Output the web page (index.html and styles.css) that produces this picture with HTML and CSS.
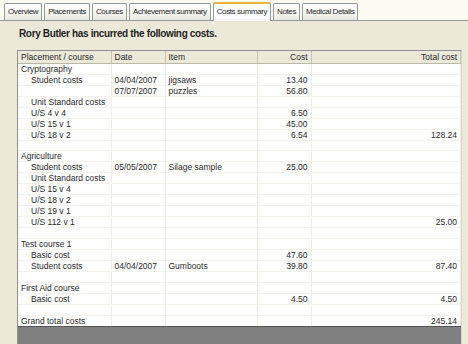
FILE: index.html
```html
<!DOCTYPE html>
<html lang="en">
<head>
  <meta charset="UTF-8" />
  <title>Costs summary</title>
  <link rel="stylesheet" href="styles.css">
</head>
<body>
  <div class="tabs">
    <div class="tab">Overview</div>
    <div class="tab">Placements</div>
    <div class="tab">Courses</div>
    <div class="tab">Achievement summary</div>
    <div class="tab active">Costs summary</div>
    <div class="tab">Notes</div>
    <div class="tab">Medical Details</div>
  </div>

  <div class="panel">
    <h1 class="title">Rory Butler has incurred the following costs.</h1>

    <div class="grid">
      <table class="costs">
        <colgroup>
          <col class="c-place"><col class="c-date"><col class="c-item"><col class="c-cost"><col class="c-total">
        </colgroup>
        <thead>
          <tr><th>Placement / course</th><th>Date</th><th>Item</th><th class="num">Cost</th><th class="num">Total cost</th></tr>
        </thead>
        <tbody>
          <tr><td>Cryptography</td><td></td><td></td><td></td><td></td></tr>
          <tr><td class="sub">Student costs</td><td>04/04/2007</td><td>jigsaws</td><td class="num">13.40</td><td></td></tr>
          <tr><td></td><td>07/07/2007</td><td>puzzles</td><td class="num">56.80</td><td></td></tr>
          <tr><td class="sub">Unit Standard costs</td><td></td><td></td><td></td><td></td></tr>
          <tr><td class="sub">U/S 4 v 4</td><td></td><td></td><td class="num">6.50</td><td></td></tr>
          <tr><td class="sub">U/S 15 v 1</td><td></td><td></td><td class="num">45.00</td><td></td></tr>
          <tr><td class="sub">U/S 18 v 2</td><td></td><td></td><td class="num">6.54</td><td class="num">128.24</td></tr>
          <tr><td></td><td></td><td></td><td></td><td></td></tr>
          <tr><td>Agriculture</td><td></td><td></td><td></td><td></td></tr>
          <tr><td class="sub">Student costs</td><td>05/05/2007</td><td>Silage sample</td><td class="num">25.00</td><td></td></tr>
          <tr><td class="sub">Unit Standard costs</td><td></td><td></td><td></td><td></td></tr>
          <tr><td class="sub">U/S 15 v 4</td><td></td><td></td><td></td><td></td></tr>
          <tr><td class="sub">U/S 18 v 2</td><td></td><td></td><td></td><td></td></tr>
          <tr><td class="sub">U/S 19 v 1</td><td></td><td></td><td></td><td></td></tr>
          <tr><td class="sub">U/S 112 v 1</td><td></td><td></td><td></td><td class="num">25.00</td></tr>
          <tr><td></td><td></td><td></td><td></td><td></td></tr>
          <tr><td>Test course 1</td><td></td><td></td><td></td><td></td></tr>
          <tr><td class="sub">Basic cost</td><td></td><td></td><td class="num">47.60</td><td></td></tr>
          <tr><td class="sub">Student costs</td><td>04/04/2007</td><td>Gumboots</td><td class="num">39.80</td><td class="num">87.40</td></tr>
          <tr><td></td><td></td><td></td><td></td><td></td></tr>
          <tr><td>First Aid course</td><td></td><td></td><td></td><td></td></tr>
          <tr><td class="sub">Basic cost</td><td></td><td></td><td class="num">4.50</td><td class="num">4.50</td></tr>
          <tr><td></td><td></td><td></td><td></td><td></td></tr>
          <tr><td>Grand total costs</td><td></td><td></td><td></td><td class="num">245.14</td></tr>
        </tbody>
      </table>
    </div>
  </div>
</body>
</html>
```

FILE: styles.css
```css
:root {
  --xp-beige: #ece9d8;
  --tab-border: #919b9c;
  --grid-line: #efede4;
  --text: #2a2a2a;
}
* {
  box-sizing: border-box;
}
body {
  margin: 0;
  width: 468px;
  height: 344px;
  overflow: hidden;
  background: var(--xp-beige);
  font-family: "Liberation Sans", Arial, sans-serif;
  font-size: 8.5px;
  color: var(--text);
}

/* tab strip */
.tabs {
  height: 21px;
  display: flex;
  align-items: flex-end;
  gap: 2px;
  padding-left: 4px;
  background: #fbfbf1;
  border-bottom: 1px solid var(--tab-border);
}
.tab {
  height: 17px;
  line-height: 15px;
  padding: 0 3px;
  font-size: 8px;
  letter-spacing: -0.4px;
  border: 1px solid var(--tab-border);
  border-bottom: none;
  border-radius: 2px 2px 0 0;
  background: linear-gradient(#ffffff, #f3f2ec 70%, #e6e5de);
  white-space: nowrap;
}
.tab.active {
  height: 19px;
  margin-bottom: -1px;
  line-height: 16px;
  background: #fcfcfe;
  border-top: 2px solid #f2b13a;
}

/* panel */
.panel {
  padding: 0 6px 0 17px;
}
.title {
  margin: 0;
  padding: 7px 0 0 2px;
  height: 29px;
  font-size: 10px;
  letter-spacing: -0.35px;
  font-weight: bold;
  color: #1e1e1e;
}

.grid {
  height: 296px;
  background: #808080;
  border: 1px solid #8f8f8f;
  border-right-color: #d8d6c8;
}
.costs {
  width: 100%;
  border-collapse: collapse;
  table-layout: fixed;
  background: #fff;
}
.c-place { width: 93px; }
.c-date { width: 54px; }
.c-item { width: 92px; }
.c-cost { width: 54px; }

.costs th,
.costs td {
  height: 10.85px;
  padding: 0 3px;
  line-height: 10px;
  font-weight: normal;
  text-align: left;
  white-space: nowrap;
  overflow: hidden;
  border-right: 1px solid var(--grid-line);
  border-bottom: 1px solid #f4f3ee;
}
.costs th {
  height: 12px;
  background: var(--xp-beige);
  border-right: 1px solid #c4c1b0;
  border-bottom: 1px solid #b9b7a8;
}
.costs .num {
  text-align: right;
}
.costs .sub {
  padding-left: 13px;
}
.costs tbody tr:last-child td {
  border-bottom: 1px solid #555;
}
```
